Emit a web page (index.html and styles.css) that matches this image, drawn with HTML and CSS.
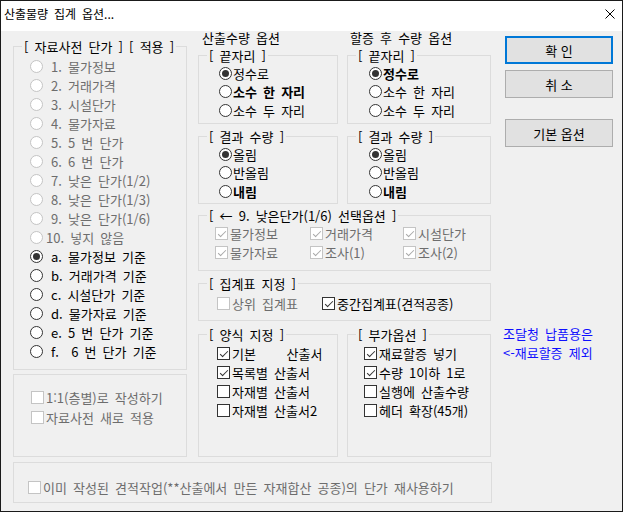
FILE: index.html
```html
<!DOCTYPE html>
<html lang="ko">
<head>
    <meta charset="UTF-8">
    <title>산출물량 집계 옵션...</title>
    <link rel="stylesheet" href="styles.css">
</head>
<body>
    <div class="window">
        <div class="titlebar">
            <span class="title">산출물량 집계 옵션...</span>
            <svg class="close" width="10" height="10" viewBox="0 0 10 10">
                <path d="M0.5 0.5 L9.5 9.5 M9.5 0.5 L0.5 9.5" stroke="#000" stroke-width="1" fill="none"/>
            </svg>
        </div>

        <div class="dialog">
            <div class="main">
                <div class="upper">
                    <!-- 왼쪽: 자료사전 단가 -->
                    <div class="left-col">
                        <div class="group g-price">
                            <div class="legend">[ 자료사전 단가 ] [ 적용 ]</div>
                            <div class="list rows19">
                                <div class="opt off"><span class="radio"></span><span class="txt">1. 물가정보</span></div>
                                <div class="opt off"><span class="radio"></span><span class="txt">2. 거래가격</span></div>
                                <div class="opt off"><span class="radio"></span><span class="txt">3. 시설단가</span></div>
                                <div class="opt off"><span class="radio"></span><span class="txt">4. 물가자료</span></div>
                                <div class="opt off"><span class="radio"></span><span class="txt">5. 5 번 단가</span></div>
                                <div class="opt off"><span class="radio"></span><span class="txt">6. 6 번 단가</span></div>
                                <div class="opt off"><span class="radio"></span><span class="txt">7. 낮은 단가(1/2)</span></div>
                                <div class="opt off"><span class="radio"></span><span class="txt">8. 낮은 단가(1/3)</span></div>
                                <div class="opt off"><span class="radio"></span><span class="txt">9. 낮은 단가(1/6)</span></div>
                                <div class="opt off tight"><span class="radio"></span><span class="txt">10. 넣지 않음</span></div>
                                <div class="opt"><span class="radio on"></span><span class="txt">a. 물가정보 기준</span></div>
                                <div class="opt"><span class="radio"></span><span class="txt">b. 거래가격 기준</span></div>
                                <div class="opt"><span class="radio"></span><span class="txt">c. 시설단가 기준</span></div>
                                <div class="opt"><span class="radio"></span><span class="txt">d. 물가자료 기준</span></div>
                                <div class="opt"><span class="radio"></span><span class="txt">e. 5 번 단가 기준</span></div>
                                <div class="opt"><span class="radio"></span><span class="txt">f.&nbsp; 6 번 단가 기준</span></div>
                            </div>
                        </div>
                        <div class="group g-extra">
                            <div class="list rows20">
                                <div class="opt off"><span class="check"></span><span class="txt">1:1(층별)로 작성하기</span></div>
                                <div class="opt off"><span class="check"></span><span class="txt">자료사전 새로 적용</span></div>
                            </div>
                        </div>
                    </div>

                    <!-- 가운데: 수량 옵션 -->
                    <div class="mid-col">
                        <div class="pair heads">
                            <div class="head">산출수량 옵션</div>
                            <div class="head">할증 후 수량 옵션</div>
                        </div>
                        <div class="pair">
                            <div class="group g-round">
                                <div class="legend">[ 끝자리 ]</div>
                                <div class="list rows18">
                                    <div class="opt near"><span class="radio on"></span><span class="txt">정수로</span></div>
                                    <div class="opt near"><span class="radio"></span><span class="txt bold">소수 한 자리</span></div>
                                    <div class="opt near"><span class="radio"></span><span class="txt">소수 두 자리</span></div>
                                </div>
                            </div>
                            <div class="group g-round">
                                <div class="legend">[ 끝자리 ]</div>
                                <div class="list rows18 pad21">
                                    <div class="opt near"><span class="radio on"></span><span class="txt bold">정수로</span></div>
                                    <div class="opt near"><span class="radio"></span><span class="txt">소수 한 자리</span></div>
                                    <div class="opt near"><span class="radio"></span><span class="txt">소수 두 자리</span></div>
                                </div>
                            </div>
                        </div>
                        <div class="pair gap12">
                            <div class="group g-result">
                                <div class="legend">[ 결과 수량 ]</div>
                                <div class="list rows18">
                                    <div class="opt near"><span class="radio on"></span><span class="txt">올림</span></div>
                                    <div class="opt near"><span class="radio"></span><span class="txt">반올림</span></div>
                                    <div class="opt near"><span class="radio"></span><span class="txt bold">내림</span></div>
                                </div>
                            </div>
                            <div class="group g-result">
                                <div class="legend">[ 결과 수량 ]</div>
                                <div class="list rows18 pad21">
                                    <div class="opt near"><span class="radio on"></span><span class="txt">올림</span></div>
                                    <div class="opt near"><span class="radio"></span><span class="txt">반올림</span></div>
                                    <div class="opt near"><span class="radio"></span><span class="txt bold">내림</span></div>
                                </div>
                            </div>
                        </div>
                        <div class="group g-low">
                            <div class="legend">[ ← 9. 낮은단가(1/6) 선택옵션 ]</div>
                            <div class="low-grid">
                                <div class="opt off"><span class="check on"></span><span class="txt">물가정보</span></div>
                                <div class="opt off"><span class="check on"></span><span class="txt">거래가격</span></div>
                                <div class="opt off"><span class="check on"></span><span class="txt">시설단가</span></div>
                                <div class="opt off"><span class="check on"></span><span class="txt">물가자료</span></div>
                                <div class="opt off"><span class="check on"></span><span class="txt">조사(1)</span></div>
                                <div class="opt off"><span class="check on"></span><span class="txt">조사(2)</span></div>
                            </div>
                        </div>
                        <div class="group g-sum">
                            <div class="legend">[ 집계표 지정 ]</div>
                            <div class="sum-row">
                                <div class="opt off first"><span class="check"></span><span class="txt">상위 집계표</span></div>
                                <div class="opt"><span class="check on"></span><span class="txt">중간집계표(견적공종)</span></div>
                            </div>
                        </div>
                        <div class="pair gap13">
                            <div class="group g-form">
                                <div class="legend">[ 양식 지정 ]</div>
                                <div class="list rows19 pad18">
                                    <div class="opt"><span class="check on"></span><span class="txt">기본&nbsp;&nbsp;&nbsp;&nbsp;&nbsp;산출서</span></div>
                                    <div class="opt"><span class="check on"></span><span class="txt">목록별 산출서</span></div>
                                    <div class="opt"><span class="check"></span><span class="txt">자재별 산출서</span></div>
                                    <div class="opt"><span class="check"></span><span class="txt">자재별 산출서2</span></div>
                                </div>
                            </div>
                            <div class="group g-form">
                                <div class="legend">[ 부가옵션 ]</div>
                                <div class="list rows19 pad16">
                                    <div class="opt"><span class="check on"></span><span class="txt">재료할증 넣기</span></div>
                                    <div class="opt"><span class="check on"></span><span class="txt">수량 1이하 1로</span></div>
                                    <div class="opt"><span class="check"></span><span class="txt">실행에 산출수량</span></div>
                                    <div class="opt"><span class="check"></span><span class="txt">헤더 확장(45개)</span></div>
                                </div>
                            </div>
                        </div>
                    </div>
                </div>

                <div class="group g-reuse">
                    <div class="opt off"><span class="check"></span><span class="txt">이미 작성된 견적작업(**산출에서 만든 자재합산 공종)의 단가 재사용하기</span></div>
                </div>
            </div>

            <!-- 오른쪽: 버튼 -->
            <div class="side">
                <button class="btn default">확 인</button>
                <button class="btn">취 소</button>
                <button class="btn spaced">기본 옵션</button>
                <div class="note">
                    <div>조달청 납품용은</div>
                    <div>&lt;-재료할증 제외</div>
                </div>
            </div>
        </div>
    </div>
</body>
</html>
```

FILE: styles.css
```css
:root {
    --dlg-bg: #f0f0f0;
    --group-line: #dcdcdc;
    --text: #000000;
    --gray-text: #6d6d6d;
    --ctl-border: #333333;
    --ctl-off: #c4c4c4;
}

* {
    margin: 0;
    padding: 0;
    box-sizing: border-box;
}

html, body {
    background: var(--dlg-bg);
}

body {
    font-family: "Noto Sans CJK KR", "Noto Sans", sans-serif;
    font-size: 13px;
    word-spacing: 2.5px;
    color: var(--text);
}

.window {
    width: 623px;
    height: 512px;
    border: 1px solid #1a1a1a;
    background: var(--dlg-bg);
    overflow: hidden;
}

.titlebar {
    height: 30px;
    background: #ffffff;
    display: flex;
    justify-content: space-between;
    align-items: flex-start;
    padding: 5px 7px 0 3px;
}

.title {
    font-size: 12px;
    line-height: 16px;
}

.close {
    margin-top: 3px;
}

.dialog {
    display: flex;
    height: 480px;
    padding-left: 12px;
}

.main {
    width: 479px;
    display: flex;
    flex-direction: column;
}

.upper {
    display: flex;
}

.left-col {
    width: 174px;
    padding-top: 15px;
}

.mid-col {
    width: 293px;
    margin-left: 11px;
}

/* group box */
.group {
    border: 1px solid var(--group-line);
}

.legend {
    width: fit-content;
    margin: -8px 0 0 8px;
    padding: 0 2px;
    line-height: 15px;
    background: var(--dlg-bg);
    white-space: nowrap;
}

.list {
    display: flex;
    flex-direction: column;
    padding-left: 20px;
}

.rows18 .opt { height: 18.5px; }
.rows19 .opt { height: 19px; }
.rows20 .opt { height: 20px; }

.pad21 { padding-left: 21px; }
.pad18 { padding-left: 18px; }
.pad16 { padding-left: 16px; }

.opt {
    display: flex;
    align-items: center;
    gap: 2px;
    white-space: nowrap;
    line-height: 15px;
}

.opt.near { gap: 1px; }

.opt.off .txt {
    color: var(--gray-text);
}

.bold {
    font-weight: 700;
}

/* radio */
.radio {
    position: relative;
    flex: none;
    width: 13px;
    height: 13px;
    border: 1px solid var(--ctl-border);
    border-radius: 50%;
    background: #ffffff;
}

.radio.on::after {
    content: "";
    position: absolute;
    left: 2px;
    top: 2px;
    width: 7px;
    height: 7px;
    border-radius: 50%;
    background: var(--ctl-border);
}

.opt.off .radio {
    border-color: var(--ctl-off);
}

/* checkbox */
.check {
    position: relative;
    flex: none;
    width: 13px;
    height: 13px;
    border: 1px solid var(--ctl-border);
    background: #ffffff;
}

.check.on::after {
    content: "";
    position: absolute;
    left: 3.5px;
    top: 0.5px;
    width: 3px;
    height: 7px;
    border-right: 1px solid var(--ctl-border);
    border-bottom: 1px solid var(--ctl-border);
    transform: rotate(45deg);
}

.opt.off .check {
    border-color: var(--ctl-off);
}

.opt.off .check.on::after {
    border-color: #a8a8a8;
}

/* 왼쪽 단가 */
.g-price {
    height: 324px;
}

.g-price .list {
    padding: 3px 0 0 16px;
}

.g-price .opt {
    gap: 8px;
}

.g-price .opt.tight {
    gap: 3px;
}

.g-extra {
    height: 83px;
    margin-top: 4px;
}

.g-extra .list {
    padding: 12px 0 0 17px;
}

/* 가운데 */
.pair {
    display: grid;
    grid-template-columns: 140px 144px;
    column-gap: 9px;
}

.heads {
    height: 14px;
    line-height: 14px;
}

.head:first-child { padding-left: 4px; }
.head:last-child { padding-left: 3px; }

.g-round {
    height: 69px;
    margin-top: 10px;
}

.g-round .list,
.g-result .list {
    padding-top: 1px;
}

.gap12 { margin-top: 12px; }
.gap13 { margin-top: 13px; }

.g-result {
    height: 68px;
}

.g-low {
    height: 56px;
    margin-top: 11px;
}

.low-grid {
    display: grid;
    grid-template-columns: 95px 93px auto;
    grid-auto-rows: 19px;
    padding: 1px 0 0 16px;
}

.g-sum {
    height: 38px;
    margin-top: 12px;
}

.sum-row {
    display: flex;
    height: 19px;
    margin-top: 3px;
    padding-left: 18px;
}

.sum-row .first {
    width: 105px;
}

.g-form {
    height: 123px;
}

.g-form .list {
    padding-top: 2px;
}

/* 아래 재사용 */
.g-reuse {
    height: 41px;
    margin-top: 5px;
    padding: 15px 0 0 14px;
}

.g-reuse .opt {
    height: 19px;
}

/* 오른쪽 버튼 */
.side {
    width: 108px;
    margin-left: 13px;
    padding-top: 5px;
    display: flex;
    flex-direction: column;
}

.btn {
    height: 28px;
    margin-bottom: 6px;
    background: #e1e1e1;
    border: 1px solid #adadad;
    font-family: inherit;
    font-size: 13px;
    color: var(--text);
}

.btn.default {
    border: 2px solid #0078d7;
}

.btn.spaced {
    margin-top: 15px;
}

.note {
    margin: 171px 0 0 -2px;
    color: #1010ff;
    line-height: 19px;
    white-space: nowrap;
}
```
